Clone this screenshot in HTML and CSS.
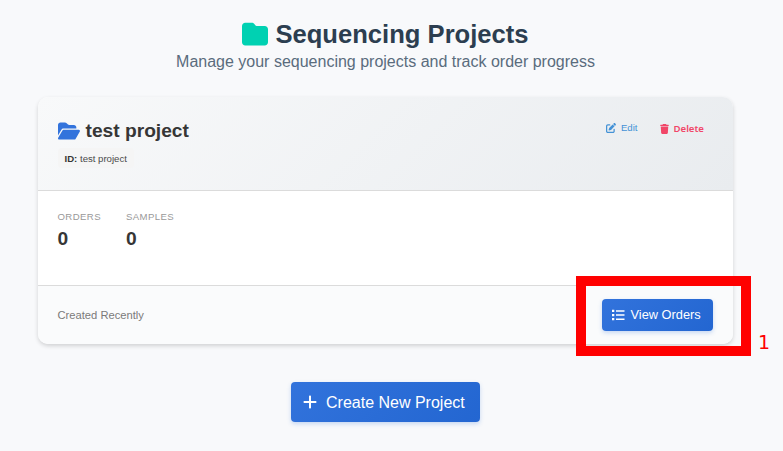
FILE: index.html
```html
<!DOCTYPE html>
<html lang="en">
<head>
<meta charset="utf-8">
<title>Sequencing Projects</title>
<link rel="stylesheet" href="styles.css">
</head>
<body>
<main class="page">
  <header class="hero">
    <h1 class="title"><svg class="icon-folder" viewBox="0 0 512 512"><path d="M64 480H448c35.300 0 64-28.700 64-64V160c0-35.300-28.700-64-64-64H288c-10.100 0-19.600-4.700-25.600-12.800L243.200 57.600C231.100 41.500 212.100 32 192 32H64C28.700 32 0 60.700 0 96V416c0 35.300 28.700 64 64 64z"/></svg><span>Sequencing Projects</span></h1>
    <p class="subtitle">Manage your sequencing projects and track order progress</p>
  </header>
  <article class="card">
    <div class="card-head">
      <div>
        <h2 class="name"><svg class="icon-open" viewBox="0 0 576 512"><path d="M88.700 223.800L0 375.800V96C0 60.700 28.700 32 64 32H181.500c17 0 33.300 6.700 45.300 18.700l26.500 26.500c12 12 28.300 18.700 45.300 18.700H416c35.300 0 64 28.700 64 64v32H144c-22.800 0-43.800 12.100-55.300 31.800zm27.600 16.100C122.100 230 132.600 224 144 224H544c11.500 0 22 6.100 27.700 16.100s5.700 22.200-.1 32.100l-112 192C453.900 474 443.400 480 432 480H32c-11.500 0-22-6.100-27.700-16.100s-5.700-22.200 .1-32.100l112-192z"/></svg><span>test project</span></h2>
        <span class="tag"><b>ID:</b> test project</span>
      </div>
      <div class="actions">
        <a class="edit"><svg class="icon-edit" viewBox="0 0 512 512"><path d="M471.600 21.700c-21.900-21.900-57.300-21.900-79.200 0L362.300 51.700l97.900 97.900 30.100-30.100c21.900-21.900 21.900-57.300 0-79.200L471.600 21.700zm-299.200 220c-6.100 6.100-10.800 13.600-13.500 21.900l-29.600 88.800c-2.900 8.600-.6 18.100 5.800 24.600s15.900 8.700 24.600 5.800l88.800-29.600c8.200-2.700 15.700-7.400 21.900-13.500L437.700 172.300 339.700 74.300 172.400 241.700zM96 64C43 64 0 107 0 160V416c0 53 43 96 96 96H352c53 0 96-43 96-96V320c0-17.700-14.300-32-32-32s-32 14.300-32 32v96c0 17.700-14.300 32-32 32H96c-17.700 0-32-14.300-32-32V160c0-17.700 14.300-32 32-32h96c17.700 0 32-14.300 32-32s-14.300-32-32-32H96z"/></svg><span>Edit</span></a>
        <a class="delete"><svg class="icon-trash" viewBox="0 0 448 512"><path d="M135.200 17.700L128 32H32C14.300 32 0 46.300 0 64S14.300 96 32 96H416c17.700 0 32-14.300 32-32s-14.300-32-32-32H320l-7.200-14.300C307.400 6.800 296.300 0 284.200 0H163.800c-12.100 0-23.200 6.800-28.600 17.700zM416 128H32L53.200 467c1.600 25.300 22.600 45 47.900 45H346.900c25.300 0 46.300-19.700 47.900-45L416 128z"/></svg><span>Delete</span></a>
      </div>
    </div>
    <div class="stats">
      <div><div class="label">ORDERS</div><div class="value">0</div></div>
      <div><div class="label">SAMPLES</div><div class="value">0</div></div>
    </div>
    <div class="card-foot">
      <span class="created">Created Recently</span>
      <a class="button view"><svg class="icon-list" viewBox="0 0 13 12"><path d="M0 .8h2.300v2.300H0zM0 4.900h2.300v2.300H0zM0 9h2.300v2.300H0zM4 1.200h8.500v1.500H4zM4 5.300h8.500v1.500H4zM4 9.400h8.500v1.500H4z"/></svg><span>View Orders</span></a>
      <span class="callout"></span>
      <span class="callout-number">1</span>
    </div>
  </article>
  <a class="button create"><svg class="icon-plus" viewBox="0 0 448 512"><path d="M256 80c0-17.700-14.300-32-32-32s-32 14.300-32 32V224H48c-17.700 0-32 14.300-32 32s14.300 32 32 32H192V432c0 17.700 14.300 32 32 32s32-14.300 32-32V288H400c17.700 0 32-14.300 32-32s-14.300-32-32-32H256V80z"/></svg><span>Create New Project</span></a>
</main>
</body>
</html>
```
FILE: styles.css
```css
* { box-sizing: border-box; }
body { margin: 0; background: #f8f9fb; font-family: "Liberation Sans", Arial, sans-serif; color: #363636; }
svg { display: block; flex: none; fill: currentColor; }
h1, h2, p { margin: 0; }
.page { height: 451px; overflow: hidden; display: flex; flex-direction: column; align-items: center; padding: 18px 50px 0 38px; }
.hero { display: flex; flex-direction: column; align-items: center; width: 100%; height: 79px; }
.title { display: flex; align-items: center; gap: 7px; height: 32px; font-size: 25.600px; line-height: 32px; color: #2c3e50; white-space: nowrap; }
.icon-folder { width: 26px; height: 26px; color: #00d1b2; }
.subtitle { margin-top: 1px; font-size: 16px; line-height: 22px; color: #5a6c7d; white-space: nowrap; }
.card { position: relative; width: 695px; height: 247px; flex: none; display: flex; flex-direction: column; background: #fff; border-radius: 10px; box-shadow: 0 2px 4px rgba(0,0,0,.16); }
.card-head { height: 94px; display: flex; justify-content: space-between; padding: 22px 29px 0 19.500px; border-bottom: 1px solid #dbdbdb; border-radius: 10px 10px 0 0; background: linear-gradient(135deg, #f8f9fa, #e9ecef); }
.name { display: flex; align-items: center; gap: 6px; font-size: 19.200px; line-height: 24px; }
.icon-open { width: 22px; height: 20px; color: #3273dc; }
.tag { display: inline-block; margin-top: 5px; padding: 0 7px; height: 20px; font-size: 9.600px; line-height: 21px; color: #4a4a4a; background: #f5f5f5; border-radius: 4px; }
.tag b { color: #363636; }
.actions { display: flex; align-items: flex-start; gap: 22px; font-size: 9.600px; line-height: 18px; }
.edit, .delete { display: flex; align-items: center; gap: 5px; }
.edit { color: #4492d6; }
.icon-edit { width: 10px; height: 10px; }
.delete { color: #f14668; font: 600 9.600px/20px "Noto Sans", sans-serif; }
.icon-trash { width: 9px; height: 10px; }
.stats { height: 95px; display: flex; gap: 25px; padding: 20px 19.500px; border-bottom: 1px solid #dbdbdb; }
.label { font-size: 9.600px; line-height: 12px; letter-spacing: .4px; color: #999; }
.value { margin-top: 5px; font-size: 19.200px; line-height: 22px; font-weight: bold; }
.card-foot { flex: 1; display: flex; align-items: center; justify-content: space-between; padding: 0 20px 0 19.500px; background: #fafbfc; border-radius: 0 0 10px 10px; }
.created { font-size: 11.200px; color: #7a7a7a; }
.button { display: flex; align-items: center; color: #fff; background: linear-gradient(135deg, #3273dc, #2366d1); border-radius: 4px; box-shadow: 0 2px 4px rgba(50,115,220,.25); white-space: nowrap; }
.view { width: 111px; height: 32px; padding-left: 10px; gap: 5.500px; font-size: 12.800px; }
.view span { margin-top: -1px; }
.icon-list { width: 13px; height: 12px; }
.callout { position: absolute; left: 538px; top: 179px; width: 175px; height: 80px; border: 10px solid #f00; }
.callout-number { position: absolute; left: 720px; top: 233px; font: 19px/24px "DejaVu Sans", sans-serif; color: #f00; }
.create { margin-top: 38px; flex: none; width: 189px; height: 40px; padding: 1px 0 0 12px; gap: 9px; font-size: 16px; }
.icon-plus { width: 14px; height: 16px; margin-top: -2px; }
```
